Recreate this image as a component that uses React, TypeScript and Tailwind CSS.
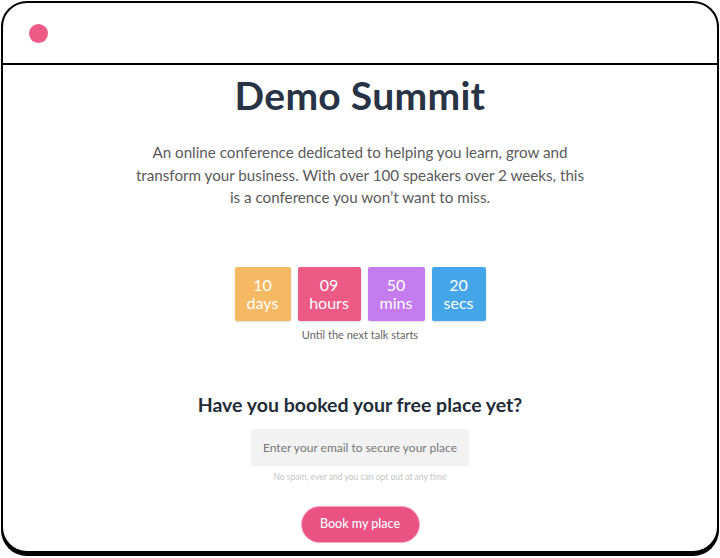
const countdown = [
  { value: "10", label: "days", color: "bg-[#f5b963]", width: "w-[56px]" },
  { value: "09", label: "hours", color: "bg-[#ec5a85]", width: "w-[63px]" },
  { value: "50", label: "mins", color: "bg-[#c57cef]", width: "w-[57px]" },
  { value: "20", label: "secs", color: "bg-[#44a6e9]", width: "w-[54px]" },
];

export default function App() {
  return (
    <div className="h-[558px] w-[720px] bg-white p-px font-['Lato',sans-serif]">
      <div className="flex h-[552px] flex-col overflow-hidden rounded-[26px] border-2 border-black bg-white shadow-[0_3px_0_#000]">
        <div className="flex h-[62px] shrink-0 items-center border-b-2 border-black px-[26px]">
          <span className="h-[19px] w-[19px] rounded-full bg-[#ec5a85]" />
        </div>

        <div className="flex flex-col items-center">
          <h1 className="mt-[5px] text-[39px] font-bold leading-[50px] tracking-[0.3px] text-[#283445]">Demo Summit</h1>

          <p className="mt-[21px] w-[460px] text-center text-[15.2px] leading-[22.5px] text-[#5a5a5a]">
            An online conference dedicated to helping you learn, grow and transform your business. With over 100 speakers over 2 weeks, this is a conference you won’t want to miss.
          </p>

          <div className="mt-[58px] flex gap-[7px]">
            {countdown.map((item) => (
              <div
                key={item.label}
                className={`${item.color} ${item.width} flex h-[54px] flex-col items-center justify-center rounded-[2px] text-[16px] leading-[18px] text-white shadow-[0_1px_2px_rgba(0,0,0,0.15)]`}
              >
                <span>{item.value}</span>
                <span>{item.label}</span>
              </div>
            ))}
          </div>
          <div className="mt-[6px] text-[11px] text-[#666]">Until the next talk starts</div>

          <h2 className="mt-[50px] text-[19.5px] font-bold leading-[24px] text-[#222b38]">Have you booked your free place yet?</h2>

          <input
            type="text"
            placeholder="Enter your email to secure your place"
            className="mt-[12px] h-[37px] w-[218px] rounded-[2px] bg-[#f2f2f2] px-[12px] text-center text-[12px] text-[#777] outline-none placeholder:text-[#777]"
          />
          <div className="mt-[5px] text-[8.5px] text-[#c4c4c4]">No spam, ever and you can opt out at any time</div>

          <button
            type="button"
            className="mt-[22px] h-[37px] w-[119px] rounded-full border border-[#f5a8c0] bg-[#ea5283] text-[12.5px] font-medium text-white"
          >
            Book my place
          </button>
        </div>
      </div>
    </div>
  );
}
